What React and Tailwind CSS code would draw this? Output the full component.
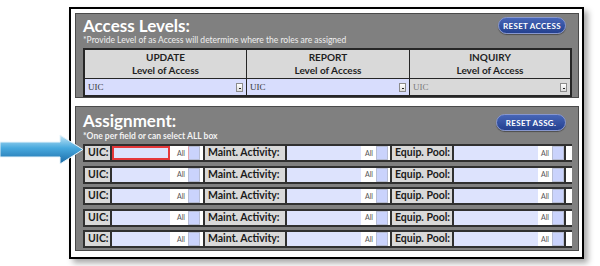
const sans = "font-['Lato','Open_Sans',sans-serif]";

// small dropdown trigger used inside the access selects
const DropBtn = () => (
  <div className="w-[7px] h-[9px] mr-[3px] bg-gradient-to-b from-white to-[#dcdcdc] border border-[#8c8c8c] flex items-end justify-center pb-[2px]">
    <div className="w-[2px] h-[1px] bg-[#222]" />
  </div>
);

const AccessSelect = ({ disabled, last }) => (
  <div
    className={`h-[16px] flex items-center justify-between ${
      disabled ? 'bg-[#d9d9d9] text-[#7a7a7a]' : 'bg-[#d8ddfd] text-[#333]'
    } ${last ? '' : 'border-r border-[#262626]'}`}
  >
    <span className="pl-[3px] text-[9px] font-['Liberation_Serif',serif] leading-none">UIC</span>
    <DropBtn />
  </div>
);

const AccessHead = ({ title, last }) => (
  <div
    className={`h-[29px] bg-[#d9d9d9] flex flex-col items-center justify-center text-[10px] font-bold leading-[13px] text-[#1f1f1f] border-b border-[#262626] ${
      last ? '' : 'border-r'
    }`}
  >
    <div>{title}</div>
    <div>Level of Access</div>
  </div>
);

const ResetBtn = ({ children, w }) => (
  <div
    className={`${w} h-[17px] rounded-full bg-gradient-to-b from-[#4766b8] to-[#24408f] border border-[#8797cf] shadow-[0_1px_1px_rgba(0,0,0,0.4)] flex items-center justify-center text-white text-[8px] font-bold tracking-[0.3px]`}
  >
    {children}
  </div>
);

// label cell + input + "All" + checkbox
const Field = ({ label, labelW, inputW, allW, red, gapAfter }) => (
  <>
    <div
      className={`${labelW} h-full bg-[#d9d9d9] border-x-2 border-[#303030] flex items-center pl-[3px] text-[10.5px] font-bold text-[#1a1a1a] shrink-0`}
    >
      {label}
    </div>
    <div
      className={`${inputW} h-full bg-[#dde3fd] shrink-0 ${red ? 'border-2 border-[#e5383b]' : ''}`}
    />
    <div className={`${allW} h-full flex items-center justify-end pr-[3px] text-[7px] text-[#555] shrink-0`}>
      All
    </div>
    <div
      className={`w-[12px] h-full bg-[#cad3fc] border border-[#b7bdd4] shrink-0 ${red ? 'border-l-[#e7a3a8]' : ''}`}
    />
    {gapAfter && <div className={`${gapAfter} shrink-0`} />}
  </>
);

const AssignRow = ({ first }) => (
  <div className="h-[18px] w-[489px] border-y-2 border-[#303030] bg-white flex">
    <Field label="UIC:" labelW="w-[29px]" inputW="w-[58px]" allW="w-[18px]" red={first} gapAfter="w-[3px]" />
    <Field label="Maint. Activity:" labelW="w-[84px]" inputW="w-[74px]" allW="w-[15px]" gapAfter="w-[2px]" />
    <Field label="Equip. Pool:" labelW="w-[64px]" inputW="w-[84px]" allW="w-[14px]" />
    <div className="w-[2px] h-full bg-[#303030]" />
  </div>
);

export default function App() {
  return (
    <div className={`relative w-[600px] h-[266px] bg-white overflow-hidden pt-[7px] pl-[69px] ${sans}`}>
      <div className="w-[515px] h-[252px] border-2 border-black bg-white shadow-[4px_4px_6px_rgba(0,0,0,0.35)] pt-[4px] pl-[4px]">
        {/* Access Levels */}
        <div className="w-[504px] h-[85px] bg-[#808080] border border-[#4a4a4a] px-[7px]">
          <div className="flex justify-between items-start">
            <div className="pt-[3px] text-[17px] font-bold leading-[18px] text-white">Access Levels:</div>
            <div className="pt-[3px] pr-[5px]">
              <ResetBtn w="w-[68px]">RESET ACCESS</ResetBtn>
            </div>
          </div>
          <div className="text-[8.5px] leading-[10px] text-[#efefef]">
            *Provide Level of as Access will determine where the roles are assigned
          </div>
          <div className="mt-[3px] w-[489px] border-2 border-[#262626] grid grid-cols-[162px_163px_1fr]">
            <AccessHead title="UPDATE" />
            <AccessHead title="REPORT" />
            <AccessHead title="INQUIRY" last />
            <AccessSelect />
            <AccessSelect />
            <AccessSelect disabled last />
          </div>
        </div>

        {/* Assignment */}
        <div className="mt-[8px] w-[504px] h-[145px] bg-[#808080] border border-[#4a4a4a] px-[7px] pt-[5px]">
          <div className="flex justify-between items-start">
            <div className="text-[17px] font-bold leading-[18px] text-white">Assignment:</div>
            <div className="pt-[2px] pr-[5px]">
              <ResetBtn w="w-[70px]">RESET ASSG.</ResetBtn>
            </div>
          </div>
          <div className="text-[8.5px] font-bold leading-[10px] text-[#f2f2f2]">
            *One per field or can select ALL box
          </div>
          <div className="mt-[3px] flex flex-col gap-[3.5px]">
            <AssignRow first />
            <AssignRow />
            <AssignRow />
            <AssignRow />
            <AssignRow />
          </div>
        </div>
      </div>

      {/* pointer arrow */}
      <svg className="absolute left-0 top-[133px]" width="86" height="32" viewBox="0 0 86 32">
        <defs>
          <linearGradient id="arrowFill" x1="0" y1="0" x2="0" y2="1">
            <stop offset="0" stopColor="#c4e7f7" />
            <stop offset="0.45" stopColor="#48a9de" />
            <stop offset="1" stopColor="#1a6aa6" />
          </linearGradient>
        </defs>
        <path
          d="M0 9 H60 V2 L83 16.5 L60 31 V24 H0 Z"
          fill="url(#arrowFill)"
          stroke="#e8f4fb"
          strokeWidth="1"
        />
      </svg>
    </div>
  );
}
